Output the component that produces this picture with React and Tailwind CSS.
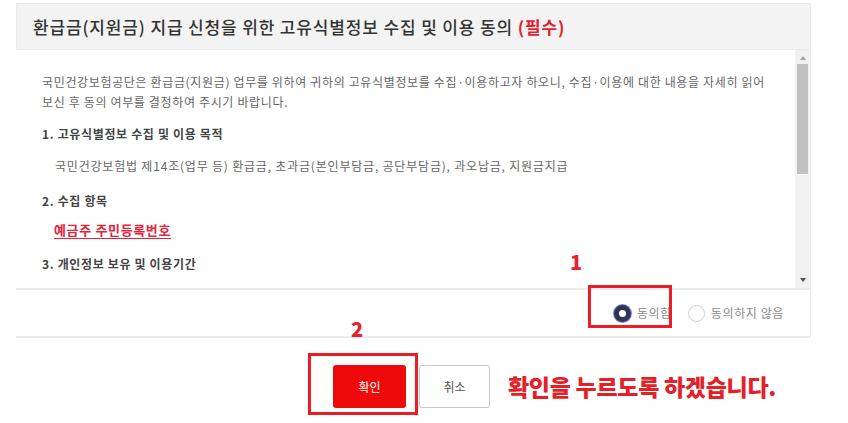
import React from 'react';

const Radio = ({ checked, label }) => (
  <label className="flex items-center gap-[6px]">
    {checked ? (
      <span className="w-[17px] h-[17px] rounded-full border-[5px] border-[#2f3554] bg-white ring-1 ring-[#7b88d6]" />
    ) : (
      <span className="w-[17px] h-[17px] rounded-full border border-[#cfcfcf] bg-white" />
    )}
    <span className="text-[12px] text-[#8a8a8a] tracking-[0.6px]">{label}</span>
  </label>
);

const ScrollBar = () => (
  <div className="w-[15px] bg-[#f1f1f1] flex flex-col items-center">
    <span className="mt-[6px] w-0 h-0 border-l-[3px] border-r-[3px] border-b-[4px] border-l-transparent border-r-transparent border-b-[#a3a3a3]" />
    <div className="mt-[4px] w-[11px] h-[110px] bg-[#c1c1c1]" />
    <div className="flex-1" />
    <span className="mb-[6px] w-0 h-0 border-l-[3px] border-r-[3px] border-t-[4px] border-l-transparent border-r-transparent border-t-[#505050]" />
  </div>
);

export default function App() {
  return (
    <div
      className="relative w-[848px] h-[423px] bg-white overflow-hidden"
      style={{ fontFamily: '"Noto Sans CJK KR", "Noto Sans", sans-serif' }}
    >
      <div className="ml-4 pt-[3px] w-[795px]">
        {/* header */}
        <div className="h-[47px] bg-[#f3f3f3] border border-[#ebebeb] flex items-center pl-[16px]">
          <h1 className="text-[17px] font-medium text-[#333] tracking-[0.85px]">
            환급금(지원금) 지급 신청을 위한 고유식별정보 수집 및 이용 동의{' '}
            <span className="text-[#e4202c] font-bold">(필수)</span>
          </h1>
        </div>

        {/* scrolling terms */}
        <div className="h-[240px] flex border-b-2 border-[#ececec] border-r border-r-[#ebebeb]">
          <div className="flex-1 overflow-hidden pl-[26px] pt-[22px] text-[12px] leading-[20px] text-[#666] tracking-[0.65px]">
            <p className="whitespace-nowrap">
              국민건강보험공단은 환급금(지원금) 업무를 위하여 귀하의 고유식별정보를 수집·이용하고자 하오니, 수집·이용에 대한 내용을 자세히 읽어
              <br />
              보신 후 동의 여부를 결정하여 주시기 바랍니다.
            </p>
            <p className="mt-[12px] font-bold text-[#444]">1. 고유식별정보 수집 및 이용 목적</p>
            <p className="mt-[12px] pl-[13px] tracking-[0.8px]">
              국민건강보험법 제14조(업무 등) 환급금, 초과금(본인부담금, 공단부담금), 과오납금, 지원금지급
            </p>
            <p className="mt-[15px] font-bold text-[#444]">2. 수집 항목</p>
            <p className="mt-[9px] pl-[12px] text-[13px] font-bold text-[#e8213a] underline underline-offset-[3px]">
              예금주 주민등록번호
            </p>
            <p className="mt-[14px] font-bold text-[#444]">3. 개인정보 보유 및 이용기간</p>
          </div>
          <ScrollBar />
        </div>

        {/* agree row */}
        <div className="h-[48px] flex items-center justify-end gap-[16px] pr-[26px] border-b-2 border-[#ececec] border-r border-r-[#ebebeb]">
          <Radio checked label="동의함" />
          <Radio label="동의하지 않음" />
        </div>
      </div>

      {/* buttons */}
      <div className="mt-[27px] ml-[333px] flex items-center">
        <button className="w-[73px] h-[43px] rounded-[3px] bg-[#ee0a0a] text-white text-[12px]">확인</button>
        <button className="ml-[13px] w-[71px] h-[43px] rounded-[3px] border border-[#c8c8c8] bg-white text-[#555] text-[12px]">
          취소
        </button>
        <span className="ml-[18px] text-[23px] font-black text-[#e42127] tracking-[-0.3px]">
          확인을 누르도록 하겠습니다.
        </span>
      </div>

      {/* annotations */}
      <span className="absolute left-[570px] top-[252px] text-[20px] font-black leading-none text-[#e8212a]">1</span>
      <div className="absolute left-[588px] top-[285px] w-[84px] h-[43px] border-[3px] border-[#ee1c25]" />
      <span className="absolute left-[351px] top-[319px] text-[20px] font-black leading-none text-[#e8212a]">2</span>
      <div className="absolute left-[308px] top-[353px] w-[110px] h-[62px] border-[3px] border-[#ee1c25]" />
    </div>
  );
}
